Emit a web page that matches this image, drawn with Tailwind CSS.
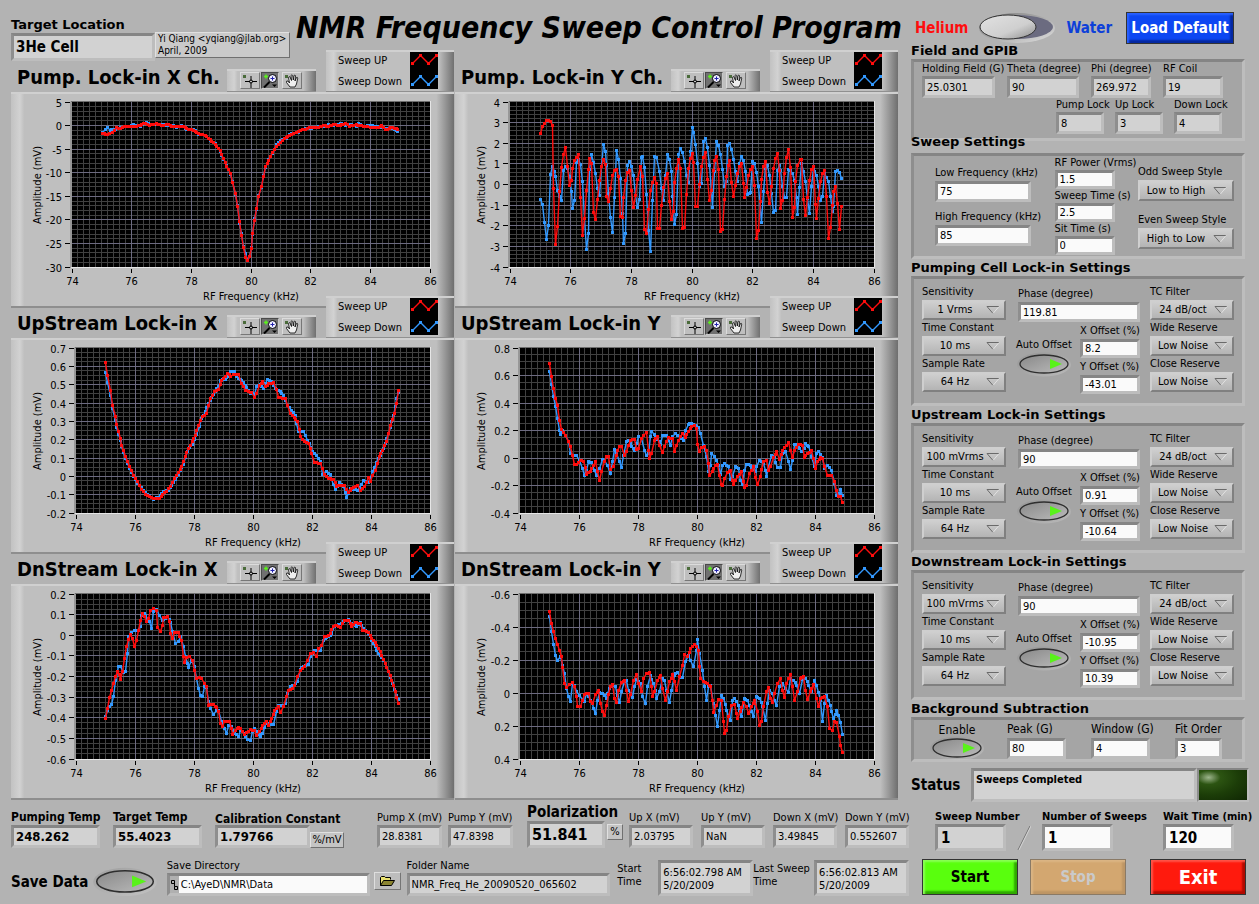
<!DOCTYPE html>
<html lang="en">
<head>
    <meta charset="UTF-8">
    <meta name="viewport" content="width=device-width, initial-scale=1.0">
    <title>NMR Frequency Sweep Control Program</title>
    <script src="https://cdn.jsdelivr.net/npm/@tailwindcss/browser@4"></script>
</head>
<body class="bg-[#b3b3b3] text-black text-[11px] leading-[14px] font-['DejaVu_Sans_Condensed','DejaVu_Sans',sans-serif]">
<div class="flex gap-[2px] pl-[11px]">

    <!-- Left side: title, graphs, readings -->
    <main class="flex-1 min-w-0">
        <header class="flex h-[62px] pt-4">
            <label class="flex flex-col w-36 shrink-0 font-bold text-[13px] leading-[17px] font-['DejaVu_Sans',sans-serif]">Target Location
                <input readonly value="3He Cell" class="w-full h-7 px-[2px] text-[15px] font-['DejaVu_Sans_Condensed',sans-serif] bg-[#d2d2d2] border-[3px] border-t-[#858585] border-l-[#8e8e8e] border-b-[#bdbdbd] border-r-[#bdbdbd] outline-none">
            </label>
            <p class="self-start mt-4 pl-[2px] w-[135px] h-[26px] shrink-0 text-[10px] leading-[12px] whitespace-nowrap bg-[#cacaca] border border-t-[#e0e0e0] border-l-[#e0e0e0] border-b-[#707070] border-r-[#707070]">Yi Qiang &lt;yqiang@jlab.org&gt;<br>April, 2009</p>
            <h1 class="-mt-1 ml-[6px] text-[30px] leading-[32px] font-bold italic whitespace-nowrap">NMR Frequency Sweep Control Program</h1>
        </header>

        <div id="graphs" class="grid grid-cols-2 gap-x-[1px] mr-[11px]"></div>

        <div class="flex items-end h-12">
            <label class="flex flex-col w-[89px] mr-[13px] font-bold text-[12px] leading-[15px] whitespace-nowrap">Pumping Temp
                <input readonly value="248.262" class="w-full h-[23px] px-[2px] text-[13px] bg-[#d2d2d2] border-[3px] border-t-[#858585] border-l-[#8e8e8e] border-b-[#bdbdbd] border-r-[#bdbdbd] outline-none">
            </label>
            <label class="flex flex-col w-[89px] mr-[13px] font-bold text-[12px] leading-[15px] whitespace-nowrap">Target Temp
                <input readonly value="55.4023" class="w-full h-[23px] px-[2px] text-[13px] bg-[#d2d2d2] border-[3px] border-t-[#858585] border-l-[#8e8e8e] border-b-[#bdbdbd] border-r-[#bdbdbd] outline-none">
            </label>
            <label class="flex flex-col w-[95px] font-bold text-[12px] leading-[12px] whitespace-nowrap">Calibration Constant
                <input readonly value="1.79766" class="w-full h-[23px] px-[2px] text-[13px] bg-[#d2d2d2] border-[3px] border-t-[#858585] border-l-[#8e8e8e] border-b-[#bdbdbd] border-r-[#bdbdbd] outline-none">
            </label>
            <span class="w-[34px] h-4 mr-[33px] text-center bg-[#c4c4c4] border border-t-[#e0e0e0] border-l-[#e0e0e0] border-b-[#707070] border-r-[#707070]">%/mV</span>
            <label class="flex flex-col w-[65px] mr-[6px] whitespace-nowrap">Pump X (mV)
                <input readonly value="28.8381" class="w-full h-[23px] px-[2px] bg-[#d2d2d2] border-[3px] border-t-[#858585] border-l-[#8e8e8e] border-b-[#bdbdbd] border-r-[#bdbdbd] outline-none">
            </label>
            <label class="flex flex-col w-[65px] mr-[14px] whitespace-nowrap">Pump Y (mV)
                <input readonly value="47.8398" class="w-full h-[23px] px-[2px] bg-[#d2d2d2] border-[3px] border-t-[#858585] border-l-[#8e8e8e] border-b-[#bdbdbd] border-r-[#bdbdbd] outline-none">
            </label>
            <label class="flex flex-col w-[78px] mr-[2px] font-bold text-[15px] leading-[18px] whitespace-nowrap">Polarization
                <input readonly value="51.841" class="w-full h-[27px] px-[2px] text-[16px] bg-[#d2d2d2] border-[3px] border-t-[#858585] border-l-[#8e8e8e] border-b-[#bdbdbd] border-r-[#bdbdbd] outline-none">
            </label>
            <span class="w-4 h-4 mb-2 mr-[6px] text-center bg-[#c4c4c4] border border-t-[#e0e0e0] border-l-[#e0e0e0] border-b-[#707070] border-r-[#707070]">%</span>
            <div class="flex-1 grid grid-cols-4 gap-2">
                <label class="flex flex-col whitespace-nowrap">Up X (mV)
                    <input readonly value="2.03795" class="w-full h-[23px] px-[2px] bg-[#d2d2d2] border-[3px] border-t-[#858585] border-l-[#8e8e8e] border-b-[#bdbdbd] border-r-[#bdbdbd] outline-none">
                </label>
                <label class="flex flex-col whitespace-nowrap">Up Y (mV)
                    <input readonly value="NaN" class="w-full h-[23px] px-[2px] bg-[#d2d2d2] border-[3px] border-t-[#858585] border-l-[#8e8e8e] border-b-[#bdbdbd] border-r-[#bdbdbd] outline-none">
                </label>
                <label class="flex flex-col whitespace-nowrap">Down X (mV)
                    <input readonly value="3.49845" class="w-full h-[23px] px-[2px] bg-[#d2d2d2] border-[3px] border-t-[#858585] border-l-[#8e8e8e] border-b-[#bdbdbd] border-r-[#bdbdbd] outline-none">
                </label>
                <label class="flex flex-col whitespace-nowrap">Down Y (mV)
                    <input readonly value="0.552607" class="w-full h-[23px] px-[2px] bg-[#d2d2d2] border-[3px] border-t-[#858585] border-l-[#8e8e8e] border-b-[#bdbdbd] border-r-[#bdbdbd] outline-none">
                </label>
            </div>
        </div>

        <div class="flex items-end h-12">
            <label class="flex items-center gap-1 w-[156px] h-7 font-bold text-[15px] whitespace-nowrap">Save Data
                <input type="checkbox" checked class="sr-only">
                <svg class="w-[66px] h-[30px]" viewBox="0 0 56 25" aria-hidden="true"><use href="#oval"/></svg>
            </label>
            <label class="flex flex-col w-[203px] mr-1">Save Directory
                <span class="flex items-center h-[23px] bg-[#b0b0b0] border-[3px] border-t-[#858585] border-l-[#8e8e8e] border-b-[#bdbdbd] border-r-[#bdbdbd]">
                    <svg class="w-[9px] h-3 shrink-0" viewBox="0 0 9 12" fill="none" stroke="#000" aria-hidden="true"><path d="M1.500 1.500h3v3h-3zM4.500 3v4.500M4.500 7.500h3v3h-3z"/></svg>
                    <input value="C:\AyeD\NMR\Data" class="w-full min-w-0 h-full px-[2px] bg-[#fafafa] outline-none">
                </span>
            </label>
            <button type="button" aria-label="Browse" class="flex items-center justify-center w-[27px] h-[18px] mb-[6px] mr-[6px] bg-[#bdbdbd] border border-t-[#dedede] border-l-[#dedede] border-b-[#757575] border-r-[#757575]">
                <svg class="w-4 h-3" viewBox="0 0 16 12" aria-hidden="true"><path d="M1.500 10.500v-8l1-1h3l1 1h5v2" fill="#e8e070" stroke="#000"/><path d="M1.500 10.500l3-5h11l-3 5z" fill="#8a8430" stroke="#000"/></svg>
            </button>
            <label class="flex flex-col w-[204px] mr-[7px]">Folder Name
                <input readonly value="NMR_Freq_He_20090520_065602" class="w-full h-[23px] px-[2px] bg-[#d2d2d2] border-[3px] border-t-[#858585] border-l-[#8e8e8e] border-b-[#bdbdbd] border-r-[#bdbdbd] outline-none">
            </label>
            <label for="start-time" class="w-[41px] h-[34px] leading-[13px]">Start<br>Time</label>
            <output id="start-time" class="w-[95px] h-9 px-[2px] pt-[3px] leading-[13px] whitespace-nowrap bg-[#d2d2d2] border-[3px] border-t-[#858585] border-l-[#8e8e8e] border-b-[#bdbdbd] border-r-[#bdbdbd]">6:56:02.798 AM<br>5/20/2009</output>
            <label for="last-time" class="w-[61px] h-[34px] leading-[13px] whitespace-nowrap">Last Sweep<br>Time</label>
            <output id="last-time" class="w-[95px] h-9 px-[2px] pt-[3px] leading-[13px] whitespace-nowrap bg-[#d2d2d2] border-[3px] border-t-[#858585] border-l-[#8e8e8e] border-b-[#bdbdbd] border-r-[#bdbdbd]">6:56:02.813 AM<br>5/20/2009</output>
        </div>
    </main>

    <!-- Right side: settings and commands -->
    <aside class="w-[348px] shrink-0">
        <div class="flex items-center h-[42px] pt-[14px] pl-1 pr-[25px]">
            <label class="flex items-center gap-[10px] font-bold text-[15px] text-[#ff0d0d]">Helium
                <input type="checkbox" class="sr-only">
                <svg class="w-[78px] h-8" viewBox="0 0 78 32" aria-hidden="true">
                    <ellipse cx="39" cy="16" rx="38" ry="15" fill="url(#rim)"/>
                    <ellipse cx="39" cy="15" rx="36" ry="12" fill="#6b6b80"/>
                    <ellipse cx="30" cy="15" rx="28" ry="12" fill="url(#knob)" stroke="#333"/>
                </svg>
                <span class="text-[#0d40d9]">Water</span>
            </label>
            <button type="button" class="ml-auto w-[108px] h-8 font-bold text-[15px] text-white whitespace-nowrap bg-[#0d47f2] border border-[#333] shadow-[inset_2px_2px_2px_#2b62ff,inset_-3px_-3px_2px_#0528a0]">Load Default</button>
        </div>

        <h2 class="h-[17px] text-[13px] leading-[17px] font-bold font-['DejaVu_Sans',sans-serif]">Field and GPIB</h2>
        <section class="w-[334px] h-[82px] px-2 bg-[#a5a5a5] border-[3px] border-t-[#858585] border-l-[#8e8e8e] border-b-[#bdbdbd] border-r-[#bdbdbd]">
            <div class="flex gap-3">
                <label class="flex flex-col w-[73px] whitespace-nowrap">Holding Field (G)
                    <input readonly value="25.0301" class="w-full h-[22px] px-[2px] bg-[#d2d2d2] border-[3px] border-t-[#858585] border-l-[#8e8e8e] border-b-[#bdbdbd] border-r-[#bdbdbd] outline-none">
                </label>
                <label class="flex flex-col w-[72px] whitespace-nowrap">Theta (degree)
                    <input readonly value="90" class="w-full h-[22px] px-[2px] bg-[#d2d2d2] border-[3px] border-t-[#858585] border-l-[#8e8e8e] border-b-[#bdbdbd] border-r-[#bdbdbd] outline-none">
                </label>
                <label class="flex flex-col w-[60px] whitespace-nowrap">Phi (degree)
                    <input readonly value="269.972" class="w-full h-[22px] px-[2px] bg-[#d2d2d2] border-[3px] border-t-[#858585] border-l-[#8e8e8e] border-b-[#bdbdbd] border-r-[#bdbdbd] outline-none">
                </label>
                <label class="flex flex-col w-[60px] whitespace-nowrap">RF Coil
                    <input readonly value="19" class="w-full h-[22px] px-[2px] bg-[#d2d2d2] border-[3px] border-t-[#858585] border-l-[#8e8e8e] border-b-[#bdbdbd] border-r-[#bdbdbd] outline-none">
                </label>
            </div>
            <div class="flex justify-end gap-[11px] pr-3">
                <label class="flex flex-col w-12 whitespace-nowrap">Pump Lock
                    <input readonly value="8" class="w-full h-[22px] px-[2px] bg-[#d2d2d2] border-[3px] border-t-[#858585] border-l-[#8e8e8e] border-b-[#bdbdbd] border-r-[#bdbdbd] outline-none">
                </label>
                <label class="flex flex-col w-12 whitespace-nowrap">Up Lock
                    <input readonly value="3" class="w-full h-[22px] px-[2px] bg-[#d2d2d2] border-[3px] border-t-[#858585] border-l-[#8e8e8e] border-b-[#bdbdbd] border-r-[#bdbdbd] outline-none">
                </label>
                <label class="flex flex-col w-12 whitespace-nowrap">Down Lock
                    <input readonly value="4" class="w-full h-[22px] px-[2px] bg-[#d2d2d2] border-[3px] border-t-[#858585] border-l-[#8e8e8e] border-b-[#bdbdbd] border-r-[#bdbdbd] outline-none">
                </label>
            </div>
        </section>

        <h2 class="h-[17px] -mt-2 mb-[3px] text-[13px] leading-[17px] font-bold font-['DejaVu_Sans',sans-serif]">Sweep Settings</h2>
        <section class="flex justify-between w-[334px] h-[106px] pl-[21px] pr-2 bg-[#a5a5a5] border-[3px] border-t-[#858585] border-l-[#8e8e8e] border-b-[#bdbdbd] border-r-[#bdbdbd]">
            <div class="w-24 pt-2">
                <label class="flex flex-col whitespace-nowrap leading-[17px]">Low Frequency (kHz)
                    <input value="75" class="w-full h-[21px] px-[2px] bg-[#fafafa] border-[3px] border-t-[#858585] border-l-[#8e8e8e] border-b-[#bdbdbd] border-r-[#bdbdbd] outline-none">
                </label>
                <label class="flex flex-col mt-[6px] whitespace-nowrap leading-[17px]">High Frequency (kHz)
                    <input value="85" class="w-full h-[21px] px-[2px] bg-[#fafafa] border-[3px] border-t-[#858585] border-l-[#8e8e8e] border-b-[#bdbdbd] border-r-[#bdbdbd] outline-none">
                </label>
            </div>
            <div class="w-[60px]">
                <label class="flex flex-col whitespace-nowrap">RF Power (Vrms)
                    <input value="1.5" class="w-full h-[19px] px-[2px] bg-[#fafafa] border-[3px] border-t-[#858585] border-l-[#8e8e8e] border-b-[#bdbdbd] border-r-[#bdbdbd] outline-none">
                </label>
                <label class="flex flex-col whitespace-nowrap">Sweep Time (s)
                    <input value="2.5" class="w-full h-[19px] px-[2px] bg-[#fafafa] border-[3px] border-t-[#858585] border-l-[#8e8e8e] border-b-[#bdbdbd] border-r-[#bdbdbd] outline-none">
                </label>
                <label class="flex flex-col whitespace-nowrap">Sit Time (s)
                    <input value="0" class="w-full h-[19px] px-[2px] bg-[#fafafa] border-[3px] border-t-[#858585] border-l-[#8e8e8e] border-b-[#bdbdbd] border-r-[#bdbdbd] outline-none">
                </label>
            </div>
            <div class="w-24 pt-[7px]">
                <label class="flex flex-col leading-[17px]">Odd Sweep Style
                    <span class="grid items-center">
                        <select class="col-start-1 row-start-1 w-full h-[21px] pr-5 appearance-none [text-align-last:center] bg-[linear-gradient(#cfcfcf,#b4b4b4)] border-2 border-t-[#cfcfcf] border-l-[#cfcfcf] border-b-[#808080] border-r-[#808080] outline-none"><option>Low to High</option></select>
                        <svg class="col-start-1 row-start-1 justify-self-end w-[14px] h-[10px] mr-[7px] pointer-events-none" viewBox="0 0 14 10" fill="none" aria-hidden="true"><use href="#arrow"/></svg>
                    </span>
                </label>
                <label class="flex flex-col mt-[10px] leading-[17px]">Even Sweep Style
                    <span class="grid items-center">
                        <select class="col-start-1 row-start-1 w-full h-[21px] pr-5 appearance-none [text-align-last:center] bg-[linear-gradient(#cfcfcf,#b4b4b4)] border-2 border-t-[#cfcfcf] border-l-[#cfcfcf] border-b-[#808080] border-r-[#808080] outline-none"><option>High to Low</option></select>
                        <svg class="col-start-1 row-start-1 justify-self-end w-[14px] h-[10px] mr-[7px] pointer-events-none" viewBox="0 0 14 10" fill="none" aria-hidden="true"><use href="#arrow"/></svg>
                    </span>
                </label>
            </div>
        </section>

        <div id="lockins"></div>

        <h2 class="h-[17px] text-[13px] leading-[17px] font-bold font-['DejaVu_Sans',sans-serif]">Background Subtraction</h2>
        <section class="flex w-[334px] h-[45px] pl-[15px] bg-[#a5a5a5] border-[3px] border-t-[#858585] border-l-[#8e8e8e] border-b-[#bdbdbd] border-r-[#bdbdbd]">
            <label class="flex flex-col items-center w-[56px] mr-[22px] pt-1 text-[12px] leading-[12px]">Enable
                <input type="checkbox" checked class="sr-only">
                <svg class="w-[56px] h-[25px] shrink-0" viewBox="0 0 56 25" aria-hidden="true"><use href="#oval"/></svg>
            </label>
            <label class="flex flex-col w-[59px] mr-[25px] text-[12px] leading-[18px] whitespace-nowrap">Peak (G)
                <input value="80" class="w-full h-[21px] px-[2px] text-[11px] bg-[#fafafa] border-[3px] border-t-[#858585] border-l-[#8e8e8e] border-b-[#bdbdbd] border-r-[#bdbdbd] outline-none">
            </label>
            <label class="flex flex-col w-[59px] mr-[25px] text-[12px] leading-[18px] whitespace-nowrap">Window (G)
                <input value="4" class="w-full h-[21px] px-[2px] text-[11px] bg-[#fafafa] border-[3px] border-t-[#858585] border-l-[#8e8e8e] border-b-[#bdbdbd] border-r-[#bdbdbd] outline-none">
            </label>
            <label class="flex flex-col w-[47px] text-[12px] leading-[18px] whitespace-nowrap">Fit Order
                <input value="3" class="w-full h-[21px] px-[2px] text-[11px] bg-[#fafafa] border-[3px] border-t-[#858585] border-l-[#8e8e8e] border-b-[#bdbdbd] border-r-[#bdbdbd] outline-none">
            </label>
        </section>

        <div class="flex items-center w-[338px] h-[34px] mt-[6px]">
            <label for="status" class="w-[60px] font-bold text-[15px]">Status</label>
            <output id="status" class="flex-1 h-full pl-[2px] pt-[2px] font-bold bg-[#d2d2d2] border-[3px] border-t-[#858585] border-l-[#8e8e8e] border-b-[#bdbdbd] border-r-[#bdbdbd]">Sweeps Completed</output>
            <span class="w-[52px] h-full border-2 border-t-[#858585] border-l-[#8e8e8e] border-b-[#bdbdbd] border-r-[#bdbdbd] bg-[radial-gradient(ellipse_at_20%_25%,#9db58c,#2c5412_22%,#1c3d08_55%,#0f2603)]"></span>
        </div>

        <div class="flex items-end h-[49px] pl-6 font-bold">
            <label class="flex flex-col w-[71px] leading-[15px] whitespace-nowrap">Sweep Number
                <input readonly value="1" class="w-full h-[27px] px-[3px] text-[15px] bg-[#d2d2d2] border-[3px] border-t-[#858585] border-l-[#8e8e8e] border-b-[#bdbdbd] border-r-[#bdbdbd] outline-none">
            </label>
            <svg class="w-[14px] h-[26px] mx-[11px]" viewBox="0 0 14 26" aria-hidden="true"><path d="M1 25L13 1" stroke="#6e6e6e"/><path d="M2 25L14 1" stroke="#d5d5d5"/></svg>
            <label class="flex flex-col w-[71px] mr-[50px] leading-[15px] whitespace-nowrap">Number of Sweeps
                <input value="1" class="w-full h-[27px] px-[3px] text-[15px] bg-[#fafafa] border-[3px] border-t-[#858585] border-l-[#8e8e8e] border-b-[#bdbdbd] border-r-[#bdbdbd] outline-none">
            </label>
            <label class="flex flex-col w-[71px] leading-[15px] whitespace-nowrap">Wait Time (min)
                <input value="120" class="w-full h-[27px] px-[3px] text-[15px] bg-[#fafafa] border-[3px] border-t-[#858585] border-l-[#8e8e8e] border-b-[#bdbdbd] border-r-[#bdbdbd] outline-none">
            </label>
        </div>

        <div class="flex mt-2 pl-[11px] font-bold">
            <button type="button" class="w-24 h-9 mr-3 text-[15px] bg-[#59ff0d] border border-[#333] shadow-[inset_2px_2px_2px_#8aff55,inset_-3px_-3px_2px_#2fa800]">Start</button>
            <button type="button" class="w-24 h-9 mr-6 text-[15px] text-[#cacaca] bg-[#d3a770] border border-[#8a7a66] shadow-[inset_2px_2px_2px_#dbb584,inset_-3px_-3px_2px_#bd9565]">Stop</button>
            <button type="button" class="w-24 h-9 text-[20px] text-white bg-[#ff1a0d] border border-[#333] shadow-[inset_2px_2px_2px_#ff5548,inset_-3px_-3px_2px_#b00a00]">Exit</button>
        </div>
    </aside>
</div>

<!-- Shared shapes -->
<svg class="block w-0 h-0">
    <defs>
        <linearGradient id="metal" x1="0" y1="0" x2="1" y2="1"><stop offset="0" stop-color="#888"/><stop offset=".5" stop-color="#a2a2a2"/><stop offset="1" stop-color="#bbb"/></linearGradient>
        <linearGradient id="rim" x1="0" y1="0" x2="1" y2="1"><stop offset="0" stop-color="#777"/><stop offset="1" stop-color="#e0e0e0"/></linearGradient>
        <linearGradient id="knob" x1="0" y1="0" x2="1" y2="1"><stop offset="0" stop-color="#e2e2e2"/><stop offset=".6" stop-color="#cfcfcf"/><stop offset="1" stop-color="#8c8c8c"/></linearGradient>
        <g id="oval">
            <ellipse cx="28" cy="12.500" rx="27" ry="12" fill="url(#rim)" opacity=".35"/>
            <ellipse cx="28" cy="12" rx="24" ry="9" fill="url(#metal)" stroke="#2e2e2e" stroke-width="1.300"/>
            <path d="M34 7l12 5-12 5z" fill="#59f21a"/>
        </g>
        <g id="arrow"><path d="M1 1.500h12M1 1.500l6 7" stroke="#6a6a6a"/><path d="M7 8.500l6-7" stroke="#e2e2e2"/></g>
    </defs>
</svg>

<script>
    // Trace points sit on a grid three times finer than the panel; dx/dy shift them into it.
    const graphs = [
        {
            title: 'Pump. Lock-in X Ch.', left: 61, top: 5, bottom: -30, step: 5, minor: 5, dx: -11, dy: -92,
            up: '307,400 322,403 336,398 350,382 362,386 380,378 400,380 415,377 436,370 448,376 468,370 485,376 505,374 520,380 545,378 560,386 580,390 596,400 615,407 630,418 645,433 660,452 670,475 680,498 690,520 698,548 706,580 712,620 718,665 724,705 731,742 737,772 743,782 749,770 754,745 758,700 764,660 770,625 776,590 783,560 790,530 797,500 806,480 818,458 830,438 842,426 858,412 875,402 895,394 915,387 935,382 955,382 970,376 985,379 1000,374 1020,376 1036,370 1048,379 1068,374 1090,378 1110,381 1130,383 1145,377 1156,389 1178,382 1193,389',
            down: '307,396 315,388 322,383 330,390 345,388 360,382 380,380 400,374 420,379 438,366 452,372 470,374 485,373 505,376 520,377 530,382 545,376 560,389 580,387 596,402 615,405 630,421 645,430 660,455 670,478 680,495 690,523 698,545 706,584 712,616 718,669 724,700 731,738 737,760 743,780 749,768 754,742 758,704 764,656 770,628 776,586 783,563 790,527 797,503 806,477 818,460 830,434 842,422 858,414 875,400 895,397 915,384 935,385 955,379 970,379 985,374 1000,377 1020,370 1036,375 1048,372 1068,378 1075,370 1090,380 1110,376 1130,380 1145,381 1156,384 1178,385 1193,395'
        },
        {
            title: 'Pump. Lock-in Y Ch.', left: 55, top: 4, bottom: -4, step: 1, minor: 5, dx: -5, dy: -92,
            up: '271,400 277,380 283,370 290,361 296,361 302,365 307,376 310,565 316,733 322,680 328,575 334,502 340,463 346,442 352,498 358,556 364,542 368,505 374,482 380,473 385,463 391,592 398,707 403,655 409,572 415,508 418,475 424,490 431,637 436,658 443,598 448,540 454,498 460,478 466,492 470,590 476,603 482,565 487,525 493,512 500,509 505,530 512,650 517,652 521,592 526,541 532,517 538,512 545,572 551,622 557,585 563,538 571,500 577,528 584,688 589,700 596,628 601,571 607,547 613,532 619,550 623,685 628,685 634,617 640,562 646,535 652,520 658,605 665,658 669,633 674,548 680,505 686,478 692,505 698,685 704,682 710,583 715,505 722,475 727,460 731,487 737,619 743,619 749,552 754,498 760,472 767,457 773,538 779,600 783,570 789,510 794,482 800,470 806,508 812,694 818,688 824,598 828,530 834,495 839,481 845,547 851,589 857,556 862,520 868,500 874,490 880,550 884,592 890,562 896,525 902,508 908,500 914,556 920,715 926,690 932,605 935,538 941,500 947,484 952,576 959,610 964,560 970,505 976,475 982,460 988,510 992,625 998,600 1004,520 1010,472 1016,448 1022,502 1028,652 1034,622 1037,545 1043,496 1050,478 1055,478 1061,598 1066,646 1072,592 1078,541 1084,508 1090,499 1095,612 1099,655 1106,595 1112,545 1118,520 1124,511 1130,590 1136,715 1141,682 1147,615 1151,575 1157,560 1162,610 1168,688 1175,620',
            down: '271,598 278,613 284,668 290,718 296,676 302,523 308,500 317,530 322,571 328,590 334,601 340,510 347,498 352,505 358,530 364,575 368,625 374,601 380,486 385,478 391,493 397,545 403,655 409,748 415,700 419,508 424,463 430,487 436,520 442,565 448,587 454,500 460,433 466,455 470,496 476,580 482,652 487,697 493,592 499,451 506,478 511,535 516,640 520,730 527,700 532,496 539,484 544,499 550,525 556,585 562,622 569,598 573,472 578,469 584,502 590,583 596,692 601,755 607,601 613,469 620,473 628,514 634,565 640,601 646,526 652,463 658,478 664,515 668,590 673,673 680,643 685,463 692,445 697,457 704,485 710,526 716,548 722,455 727,382 731,398 737,433 743,490 749,558 755,550 761,424 767,415 773,442 779,495 785,575 788,622 794,515 800,424 806,436 812,463 818,509 824,560 830,545 833,436 839,430 845,448 851,478 857,515 862,545 868,490 875,469 881,480 887,515 893,583 902,577 908,484 914,490 920,517 926,560 934,667 941,575 946,505 952,496 958,526 964,580 970,637 976,631 982,510 988,496 992,512 998,560 1004,592 1010,592 1016,508 1022,510 1028,520 1034,540 1043,643 1049,562 1055,490 1060,515 1066,545 1072,595 1078,640 1085,560 1090,505 1099,526 1105,560 1112,600 1118,590 1124,520 1136,545 1141,589 1146,635 1151,620 1157,514 1163,511 1169,517 1175,535'
        },
        {
            title: 'UpStream Lock-in X', left: 65, top: 0.7, bottom: -0.2, step: 0.1, minor: 4, dx: -11, dy: -48,
            up: '316,217 322,255 330,300 338,345 346,380 355,425 365,465 376,500 388,530 400,555 412,575 424,597 436,612 448,620 460,624 478,625 488,612 500,603 512,590 524,565 535,548 545,530 555,500 565,475 576,455 585,435 596,405 606,380 618,370 630,325 642,305 655,297 665,272 675,258 683,250 692,258 700,253 716,253 724,280 735,300 745,305 755,308 762,322 770,310 778,285 788,275 796,290 806,280 820,278 828,298 835,322 855,325 862,345 870,370 882,382 892,395 902,440 912,455 925,460 935,490 942,518 962,520 972,552 985,565 1000,568 1010,588 1032,586 1045,608 1055,595 1072,586 1080,600 1092,590 1105,562 1112,575 1125,540 1137,500 1148,480 1158,455 1170,405 1182,370 1190,340 1196,300',
            down: '316,247 322,278 330,315 338,355 346,390 355,432 365,468 376,504 388,536 400,560 412,579 424,593 436,608 448,616 460,627 475,622 490,605 505,600 520,578 535,552 550,522 562,483 576,464 590,432 604,385 615,365 630,330 645,303 655,290 662,270 675,268 684,258 692,245 704,243 710,260 725,272 740,292 752,310 762,312 768,288 780,282 790,295 802,267 815,275 825,295 840,303 850,315 862,345 875,362 885,375 895,425 910,425 922,450 938,485 950,495 960,515 968,553 980,545 990,553 1005,598 1018,578 1030,590 1040,623 1052,595 1072,602 1090,572 1105,578 1118,545 1135,505 1150,475 1165,430 1180,375 1190,325 1196,308'
        },
        {
            title: 'UpStream Lock-in Y', left: 65, top: 0.8, bottom: -0.4, step: 0.2, minor: 4, dx: -5, dy: -48,
            up: '299,220 305,260 311,295 317,325 323,345 329,390 335,418 341,428 347,435 354,455 360,470 366,495 372,523 380,522 390,510 400,515 410,552 420,545 430,525 436,515 442,545 448,570 454,545 462,515 470,500 476,500 482,538 490,530 498,495 507,470 515,468 522,497 530,485 540,450 553,447 558,478 566,475 574,445 588,427 594,480 599,505 605,490 612,450 622,438 628,465 636,487 643,468 655,443 666,445 672,485 680,465 690,440 698,430 706,442 715,425 725,408 732,405 738,415 742,462 747,485 753,472 762,470 770,482 775,520 778,556 786,545 795,525 803,523 809,555 813,582 818,586 824,565 832,548 842,540 848,570 851,582 862,560 874,545 880,575 884,592 890,585 898,550 910,530 917,563 922,583 930,560 940,515 948,512 954,540 962,530 970,502 980,485 988,507 998,482 1008,465 1016,457 1021,480 1026,502 1034,480 1045,462 1056,465 1062,502 1072,490 1083,482 1090,505 1095,535 1103,515 1112,502 1118,505 1124,530 1132,557 1145,556 1153,575 1160,600 1166,620 1172,620 1178,637',
            down: '299,244 303,283 309,318 315,350 321,385 327,420 332,433 338,420 346,435 354,455 362,490 370,495 380,495 388,512 396,535 403,557 408,540 414,515 424,518 432,540 440,556 448,535 456,507 464,510 472,525 480,550 487,515 494,478 500,490 508,515 515,532 521,495 528,455 536,452 545,470 554,482 560,460 566,440 574,445 582,480 588,497 594,490 600,440 605,423 612,432 622,448 632,462 638,435 650,437 662,465 668,440 676,430 690,440 700,452 706,420 714,403 724,400 735,407 745,412 752,430 760,465 768,500 775,545 780,525 785,490 792,500 804,525 810,552 816,525 824,520 835,530 842,568 848,560 855,530 865,535 872,570 878,583 884,540 890,522 900,526 915,545 920,528 928,510 940,520 950,560 956,530 963,497 972,500 982,532 990,532 996,490 1006,485 1014,515 1021,537 1026,510 1034,463 1044,465 1055,485 1062,475 1067,460 1076,470 1085,498 1092,530 1098,490 1106,485 1116,502 1124,535 1132,526 1145,540 1152,580 1160,617 1168,610 1172,598 1178,617'
        },
        {
            title: 'DnStream Lock-in X', left: 65, top: 0.2, bottom: -0.6, step: 0.1, minor: 4, dx: -11, dy: -44,
            up: '317,535 323,505 329,472 335,452 341,430 347,410 352,395 358,402 362,418 368,395 374,355 380,320 384,298 390,283 396,295 402,320 408,300 415,270 420,240 428,220 434,230 440,243 446,235 452,210 460,205 468,210 473,262 480,275 486,255 490,232 502,230 508,245 512,280 518,295 524,278 534,278 544,300 550,350 554,368 560,352 568,348 576,360 584,390 590,415 598,412 605,415 612,430 618,440 624,495 640,493 650,503 656,515 660,550 666,560 672,545 688,545 698,583 706,570 716,562 722,565 732,582 740,578 750,568 762,572 770,585 778,575 788,555 798,545 806,555 815,535 824,510 836,500 842,517 850,500 858,470 864,450 876,445 884,437 892,410 900,390 914,380 922,360 930,340 940,338 948,348 956,325 964,315 972,288 980,290 990,280 1000,258 1010,255 1020,262 1032,240 1045,242 1055,258 1065,247 1080,250 1088,270 1105,277 1115,295 1130,315 1145,345 1160,382 1175,420 1185,455 1196,490',
            down: '317,528 323,510 329,500 335,492 341,468 347,420 354,380 362,378 370,398 376,395 382,340 386,290 394,278 402,272 412,272 420,260 424,225 432,220 442,235 448,245 454,265 460,215 470,208 478,225 486,240 495,235 502,230 512,248 518,275 526,310 534,303 542,290 550,320 556,350 562,370 566,383 574,362 582,378 590,415 596,445 600,465 606,470 612,440 618,442 626,485 632,505 640,523 648,510 656,510 664,545 672,565 678,580 686,555 694,560 704,580 714,588 722,570 732,580 742,598 750,600 756,575 764,565 772,575 782,590 788,580 798,545 808,553 820,552 828,515 836,495 848,495 856,490 862,460 870,438 882,435 892,425 900,388 916,375 926,372 932,350 942,330 952,330 962,330 970,300 985,290 995,280 1002,258 1016,253 1030,245 1044,238 1055,250 1070,258 1080,248 1090,265 1105,280 1120,310 1135,340 1150,360 1165,395 1178,430 1188,465 1196,478'
        },
        {
            title: 'DnStream Lock-in Y', left: 65, top: -0.6, bottom: 0.4, step: 0.2, minor: 4, dx: -5, dy: -44,
            up: '299,214 304,250 310,275 316,295 322,312 328,330 333,350 338,382 344,430 350,443 358,432 366,427 374,440 380,470 383,498 390,498 396,480 404,462 414,460 420,485 428,490 436,462 446,450 452,490 457,515 462,527 468,495 474,462 480,438 488,433 494,475 500,488 506,450 514,428 524,420 530,450 536,485 542,462 550,420 558,403 566,430 573,455 580,415 588,400 598,398 604,440 608,468 614,455 622,420 632,407 638,445 645,482 652,455 658,425 668,403 674,425 680,452 688,410 696,375 704,342 712,350 722,325 732,313 738,318 744,330 748,380 752,415 760,425 772,430 782,440 786,480 790,518 798,495 806,478 814,480 820,545 824,580 830,572 836,530 844,495 852,492 858,520 863,535 870,515 880,487 888,500 896,520 904,500 914,480 922,515 928,556 934,545 940,500 948,455 956,443 962,475 968,487 974,460 982,430 990,415 997,450 1003,473 1010,430 1020,402 1028,440 1034,480 1042,455 1050,415 1060,408 1067,450 1073,478 1080,455 1090,433 1098,475 1104,498 1112,475 1124,468 1132,500 1138,565 1146,570 1154,545 1160,548 1168,590 1172,617 1178,637',
            down: '299,230 304,275 310,312 316,345 322,360 330,350 336,375 342,400 350,445 356,470 362,483 368,430 374,435 380,455 388,465 396,478 402,483 408,460 416,470 426,490 436,520 442,480 448,458 458,460 468,475 478,445 488,435 496,440 502,465 508,487 514,455 522,425 530,420 536,450 546,472 552,440 560,418 570,430 578,470 586,490 592,440 600,405 610,430 620,475 628,455 636,415 642,420 650,450 658,488 664,450 672,405 682,397 690,412 698,412 706,365 714,345 722,360 730,378 738,330 742,298 748,340 756,390 762,440 768,480 776,440 782,435 790,490 796,525 803,560 808,510 813,467 820,475 830,510 840,540 846,480 854,475 864,495 874,528 882,475 892,480 904,515 910,530 918,468 928,475 938,500 946,540 952,490 958,450 966,460 974,480 980,495 988,440 998,430 1006,445 1014,458 1022,415 1030,420 1040,435 1048,460 1056,418 1066,415 1076,435 1084,455 1092,420 1100,435 1110,480 1118,545 1124,490 1130,465 1140,495 1150,535 1160,512 1166,525 1172,548 1178,583'
        }
    ];

    const plotTop = 10, plotBottom = 175, plotRight = 419;

    function trace(text, color, dx, dy) {
        const raw = text.split(' ').map(p => p.split(',').map(Number));
        const points = [raw[0]];
        for (let i = 1; i < raw.length; i++) {
            const [x0, y0] = raw[i - 1];
            const [x1, y1] = raw[i];
            const n = Math.max(1, Math.round((x1 - x0) / 6));
            for (let k = 1; k <= n; k++) {
                points.push([x0 + (x1 - x0) * k / n, y0 + (y1 - y0) * k / n]);
            }
        }
        const pts = points.map(([x, y]) => [Math.floor(x / 3 + dx), Math.floor(y / 3 + dy)]);
        const line = pts.map(p => (p[0] + 0.5) + ',' + (p[1] + 0.5)).join(' ');
        const dots = pts.map(p => `M${p[0] - 1} ${p[1] - 1}h3v3h-3z`).join('');
        return `<polyline points="${line}" fill="none" stroke="${color}" stroke-width="1.400"/><path d="${dots}" fill="${color}"/>`;
    }

    function drawPlot(g) {
        const w = plotRight - g.left, h = plotBottom - plotTop;
        let minor = '', major = '', ticks = '', labels = '';
        for (let i = 0; i <= 60; i++) {
            const x = Math.floor(g.left + w * i / 60) + 0.5;
            if (i % 10) {
                minor += `M${x} ${plotTop}V${plotBottom}`;
            } else {
                if (i > 0 && i < 60) major += `M${x} ${plotTop}V${plotBottom}`;
                ticks += `M${x} 177v4`;
                labels += `<text x="${x}" y="193" text-anchor="middle">${74 + i / 5}</text>`;
            }
        }
        const count = Math.round(Math.abs(g.top - g.bottom) / g.step) * g.minor;
        const sign = g.top > g.bottom ? -1 : 1;
        for (let i = 0; i <= count; i++) {
            const y = Math.floor(plotTop + h * i / count) + 0.5;
            if (i % g.minor) {
                minor += `M${g.left} ${y}H${plotRight}`;
            } else {
                if (i > 0 && i < count) major += `M${g.left} ${y}H${plotRight}`;
                ticks += `M${g.left - 7} ${y}h5`;
                const value = g.top + sign * g.step * i / g.minor;
                labels += `<text x="${g.left - 10}" y="${y + 4}" text-anchor="end">${+value.toFixed(1) || 0}</text>`;
            }
        }
        const mid = (g.left + plotRight) / 2;
        return `
            <svg class="block w-full text-[11px]" viewBox="0 0 443 216" role="img" aria-label="${g.title}">
                <path d="M${g.left - 1} 176V9.500H${plotRight + 1}" fill="none" stroke="#6e6e6e"/>
                <rect x="${g.left}" y="${plotTop}" width="${w}" height="${h}" fill="#000"/>
                <path d="${minor}" stroke="#404040"/>
                <path d="${major}" stroke="#6c6a80"/>
                <path d="M${plotRight + 0.5} 9V175.500H${g.left - 1}" fill="none" stroke="#e6e6e6"/>
                <path d="${ticks}" stroke="#000"/>
                ${labels}
                <text x="${mid}" y="208" text-anchor="middle">RF Frequency (kHz)</text>
                <text transform="translate(30 93) rotate(-90)" text-anchor="middle">Amplitude (mV)</text>
                ${trace(g.down, '#3399ff', g.dx, g.dy)}
                ${trace(g.up, '#ff0d0d', g.dx, g.dy)}
            </svg>`;
    }

    document.getElementById('graphs').innerHTML = graphs.map(g => `
        <figure>
            <figcaption class="flex items-end h-[30px] pl-[6px]">
                <h2 class="flex-1 h-[26px] text-[20px] leading-[22px] font-bold whitespace-nowrap">${g.title}</h2>
                <div class="flex items-center w-[89px] h-[23px] mr-[10px] pl-[13px] bg-[linear-gradient(90deg,#c2c2c2,#d2d2d2_8%,#bfbfbf_12%,#bfbfbf_86%,#707070)] shadow-[inset_0_2px_#d0d0d0,inset_0_-1px_#909090]">
                    <button type="button" aria-label="Cursor" class="w-5 h-[17px] mr-[1px] bg-[#bfbfbf] border border-t-[#dcdcdc] border-l-[#dcdcdc] border-b-[#777] border-r-[#777]">
                        <svg class="w-[18px] h-[15px]" viewBox="0 0 18 15"><path d="M2 2h3v3H2z" fill="#4a6b3a"/><path d="M4 8.500h5M11 8.500h5M10 3v4.500M10 9.500V15" stroke="#000" fill="none"/><circle cx="10" cy="8.500" r="1.500" fill="none" stroke="#000"/></svg>
                    </button>
                    <button type="button" aria-label="Zoom" class="w-[18px] h-[17px] mr-[3px] bg-[#707070] border border-t-[#4a4a4a] border-l-[#4a4a4a] border-b-[#c8c8c8] border-r-[#c8c8c8]">
                        <svg class="w-4 h-[15px]" viewBox="0 0 16 15"><path d="M2 3.500h4M4 1.500v4" stroke="#59f21a" stroke-width="1.500"/><path d="M7.500 9L2 14.500" stroke="#000" stroke-width="2"/><circle cx="10.500" cy="5.500" r="4" fill="#eef" stroke="#000"/><path d="M8.500 5.500h4M10.500 3.500v4" stroke="#22a"/><path d="M10 11.500h5l-2.500 2.500z" fill="#000"/></svg>
                    </button>
                    <button type="button" aria-label="Pan" class="w-5 h-[17px] bg-[#bfbfbf] border border-t-[#dcdcdc] border-l-[#dcdcdc] border-b-[#777] border-r-[#777]">
                        <svg class="w-[18px] h-[15px]" viewBox="0 0 18 15"><path d="M2 2h3v3H2z" fill="#4a6b3a"/><path d="M7 14L3.500 9.500q-.5-2 1.500-1.500l1.500 2L5.500 4.500q.5-1.500 1.500-.5l1.500 3.500-.5-5q1-1.500 1.700 0l.6 4.500.7-4.500q1-1 1.500.2L12 8l1.500-3.500q1.200-.5 1.200.7L13.500 11 12 14z" fill="#eee" stroke="#000" stroke-width=".8"/></svg>
                    </button>
                </div>
                <div class="relative flex w-[128px] h-[42px] pl-3 justify-between pr-4 bg-[linear-gradient(90deg,#c2c2c2,#d2d2d2_6%,#bfbfbf_9%,#bfbfbf_88%,#707070)] shadow-[inset_0_2px_#d0d0d0,inset_0_-1px_#909090]">
                    <p class="leading-[21px] whitespace-nowrap">Sweep UP<br>Sweep Down</p>
                    <svg class="w-7 h-[37px] mt-[2px] bg-black" viewBox="0 0 28 37" aria-hidden="true">
                        <path d="M2.500 11.500l8-8 8 8 8-8" fill="none" stroke="#ff0d0d" stroke-width="1.400"/><path d="M1 10h3v3H1zM9 2h3v3H9zM17 10h3v3h-3zM25 2h3v3h-3z" fill="#ff0d0d"/>
                        <path d="M2.500 32.500l8-8 8 8 8-8" fill="none" stroke="#3399ff" stroke-width="1.400"/><path d="M1 31h3v3H1zM9 23h3v3H9zM17 31h3v3h-3zM25 23h3v3h-3z" fill="#3399ff"/>
                    </svg>
                </div>
            </figcaption>
            <div class="bg-[linear-gradient(90deg,#c2c2c2,#d2d2d2_2%,#bfbfbf_3%,#bfbfbf_96%,#6e6e6e)] shadow-[inset_0_2px_#d0d0d0,inset_0_-2px_#8e8e8e]">${drawPlot(g)}</div>
        </figure>`).join('');

    const lockins = [
        { name: 'Pumping Cell', sensitivity: '1 Vrms', phase: '119.81', x: '8.2', y: '-43.01' },
        { name: 'Upstream', sensitivity: '100 mVrms', phase: '90', x: '0.91', y: '-10.64' },
        { name: 'Downstream', sensitivity: '100 mVrms', phase: '90', x: '-10.95', y: '10.39' }
    ];

    function dropdown(label, value) {
        return `
            <label class="flex flex-col leading-4 whitespace-nowrap">${label}
                <span class="grid items-center">
                    <select class="col-start-1 row-start-1 w-full h-5 pr-[18px] appearance-none [text-align-last:center] bg-[linear-gradient(#cfcfcf,#b4b4b4)] border-2 border-t-[#cfcfcf] border-l-[#cfcfcf] border-b-[#808080] border-r-[#808080] outline-none"><option>${value}</option></select>
                    <svg class="col-start-1 row-start-1 justify-self-end w-[14px] h-[10px] mr-[6px] pointer-events-none" viewBox="0 0 14 10" fill="none" aria-hidden="true"><use href="#arrow"/></svg>
                </span>
            </label>`;
    }

    document.getElementById('lockins').innerHTML = lockins.map(l => `
        <h2 class="h-[17px] text-[13px] leading-[17px] font-bold font-['DejaVu_Sans',sans-serif]">${l.name} Lock-in Settings</h2>
        <section class="flex justify-between w-[334px] h-[130px] px-2 pt-[5px] bg-[#a5a5a5] border-[3px] border-t-[#858585] border-l-[#8e8e8e] border-b-[#bdbdbd] border-r-[#bdbdbd]">
            <div class="w-[84px]">
                ${dropdown('Sensitivity', l.sensitivity)}
                ${dropdown('Time Constant', '10 ms')}
                ${dropdown('Sample Rate', '64 Hz')}
            </div>
            <div class="w-[124px] pt-[2px]">
                <label class="flex flex-col pl-[2px] leading-4">Phase (degree)
                    <input value="${l.phase}" class="w-full h-5 px-[2px] bg-[#fafafa] border-[3px] border-t-[#858585] border-l-[#8e8e8e] border-b-[#bdbdbd] border-r-[#bdbdbd] outline-none">
                </label>
                <div class="flex justify-between">
                    <label class="flex flex-col w-14 pt-4 leading-[14px] whitespace-nowrap">Auto Offset
                        <input type="checkbox" checked class="sr-only">
                        <svg class="w-14 h-[25px]" viewBox="0 0 56 25" aria-hidden="true"><use href="#oval"/></svg>
                    </label>
                    <div class="w-[60px]">
                        <label class="flex flex-col leading-[17px] whitespace-nowrap">X Offset (%)
                            <input value="${l.x}" class="w-full h-[19px] px-[2px] bg-[#fafafa] border-[3px] border-t-[#858585] border-l-[#8e8e8e] border-b-[#bdbdbd] border-r-[#bdbdbd] outline-none">
                        </label>
                        <label class="flex flex-col leading-[17px] whitespace-nowrap">Y Offset (%)
                            <input value="${l.y}" class="w-full h-[19px] px-[2px] bg-[#fafafa] border-[3px] border-t-[#858585] border-l-[#8e8e8e] border-b-[#bdbdbd] border-r-[#bdbdbd] outline-none">
                        </label>
                    </div>
                </div>
            </div>
            <div class="w-[84px]">
                ${dropdown('TC Filter', '24 dB/oct')}
                ${dropdown('Wide Reserve', 'Low Noise')}
                ${dropdown('Close Reserve', 'Low Noise')}
            </div>
        </section>`).join('');
</script>
</body>
</html>
